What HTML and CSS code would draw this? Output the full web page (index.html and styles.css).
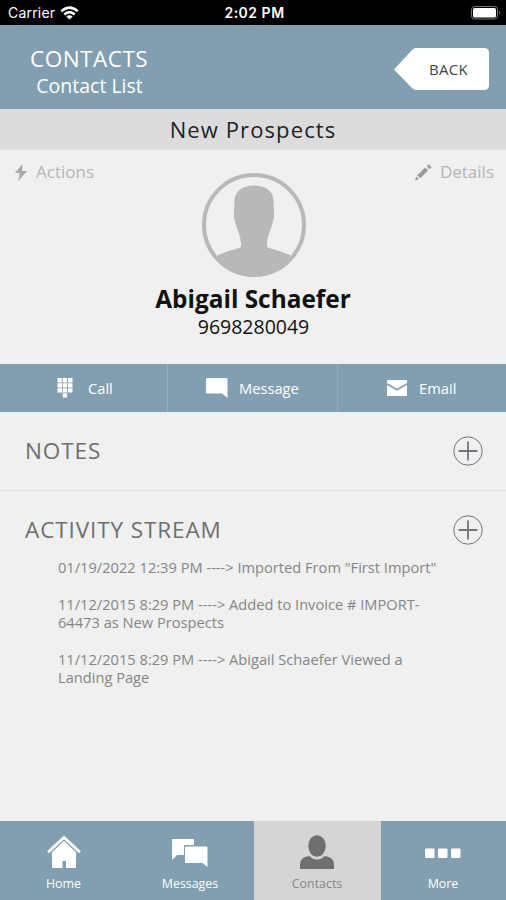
FILE: index.html
```html
<!DOCTYPE html>
<html lang="en">
<head>
    <meta charset="UTF-8">
    <meta name="viewport" content="width=device-width, initial-scale=1.0">
    <title>Contacts</title>
    <link rel="stylesheet" href="styles.css">
</head>
<body>
    <div class="app">
        <div class="status">
            <div class="carrier">
                <span>Carrier</span>
                <svg width="19" height="14" viewBox="0 0 19 14" fill="none" stroke="#fff" stroke-width="2.6">
                    <path d="M1.3 5.2Q9.500-2 17.700 5.200"/>
                    <path d="M4.300 8.400Q9.500 4 14.700 8.400"/>
                    <path d="M9.500 13.600L6.300 10.600Q9.500 8 12.700 10.600Z" fill="#fff" stroke="none"/>
                </svg>
            </div>
            <div class="time">2:02 PM</div>
            <svg class="battery" width="30" height="14" viewBox="0 0 30 14">
                <rect x=".5" y=".5" width="26" height="12.500" rx="3" fill="none" stroke="#777"/>
                <rect x="2" y="2" width="23" height="9.500" rx="1.500" fill="#fff"/>
                <path d="M28 4.500Q30 6.700 28 9Z" fill="#777"/>
            </svg>
        </div>

        <div class="header">
            <div class="titles">
                <h1>CONTACTS</h1>
                <p>Contact List</p>
            </div>
            <a href="#" class="back">
                <svg width="95" height="42" viewBox="0 0 95 42">
                    <path d="M0 21.500L18 2Q20 0 22 0H90Q95 0 95 5V37Q95 42 90 42H22Q20 42 18 40Z" fill="#fff"/>
                </svg>
                <span>BACK</span>
            </a>
        </div>

        <div class="group">New Prospects</div>

        <div class="profile">
            <div class="links">
                <a href="#">
                    <svg width="12" height="17" viewBox="0 0 12 17"><path d="M7.500 0L0 9H4.800L3.300 17L12 7H7Z" fill="#a9a9a9"/></svg>
                    <span class="actions">Actions</span>
                </a>
                <a href="#">
                    <svg width="17" height="17" viewBox="0 0 17 17" fill="#9c9c9c"><path d="M0 16.500L1.200 12.500L4 15.300Z"/><path d="M2.200 11.300L10.200 3.600L13.200 6.600L5.200 14.300Z"/><path d="M11.700 2.200L13.700.2L16.600 3.200L14.600 5.200Z"/></svg>
                    <span class="details">Details</span>
                </a>
            </div>
            <svg class="avatar" width="104" height="104" viewBox="0 0 104 104">
                <circle cx="52" cy="52" r="50" fill="none" stroke="#b9b8b6" stroke-width="4"/>
                <path d="M15 88L16 82Q25 78 37 75Q40 74 39 70C38 60 34 55 33 48C31 43 32 38 32.500 31C31 18 41 12.500 52 12.500C63 12.500 73 18 71.500 31C72 38 73 43 71 48C70 55 66 60 65 70Q64 74 67 75Q79 78 88 82L89 88A51 51 0 0 1 15 88Z" fill="#b9b8b6"/>
            </svg>
            <h2>Abigail Schaefer</h2>
            <p class="phone">9698280049</p>
        </div>

        <div class="bar">
            <a href="#" class="call">
                <svg width="16" height="20" viewBox="0 0 16 20" fill="#fff">
                    <path d="M.5 0h4.500v4.500h-4.500zM5.700 0h4.500v4.500h-4.500zM11 0h4.500v4.500h-4.500zM.5 5.200h4.500v4.300h-4.500zM5.700 5.200h4.500v4.300h-4.500zM11 5.200h4.500v4.300h-4.500zM.5 10.200h4.500v4.300h-4.500zM5.700 10.200h4.500v4.300h-4.500zM11 10.200h4.500v4.300h-4.500zM5.700 15.200h4.500v4.300h-4.500z"/>
                </svg>
                <span>Call</span>
            </a>
            <a href="#" class="message">
                <svg width="22" height="20" viewBox="0 0 22 20"><path d="M1 0H20.500Q21.500 0 21.500 1V20L16 15.500H1Q0 15.500 0 14.500V1Q0 0 1 0Z" fill="#fff"/></svg>
                <span>Message</span>
            </a>
            <a href="#" class="email">
                <svg width="20" height="16" viewBox="0 0 20 16" fill="#fff"><path d="M0 0H20V3L10 8.800L0 3Z"/><path d="M0 5L10 10.700L20 5V16H0Z"/></svg>
                <span>Email</span>
            </a>
        </div>

        <div class="section notes">
            <h3>NOTES</h3>
            <svg class="plus" width="30" height="30" viewBox="0 0 30 30" fill="none" stroke="#73757a"><circle cx="15" cy="15" r="14.200"/><path d="M15 5.500V24.500M5.500 15H24.500" stroke-width="1.800"/></svg>
        </div>
        <div class="section activity">
            <h3>ACTIVITY STREAM</h3>
            <svg class="plus" width="30" height="30" viewBox="0 0 30 30" fill="none" stroke="#73757a"><circle cx="15" cy="15" r="14.200"/><path d="M15 5.500V24.500M5.500 15H24.500" stroke-width="1.800"/></svg>
        </div>
        <ul class="stream">
            <li>01/19/2022 12:39 PM ----&gt; Imported From "First Import"</li>
            <li>11/12/2015 8:29 PM ----&gt; Added to Invoice # IMPORT-<br>64473 as New Prospects</li>
            <li>11/12/2015 8:29 PM ----&gt; Abigail Schaefer Viewed a<br>Landing Page</li>
        </ul>

        <div class="tabs">
            <a href="#">
                <svg width="34" height="34" viewBox="0 0 34 34">
                    <path d="M1 17.300L17 2.500L33 17.300" fill="none" stroke="#fff" stroke-width="2.800"/>
                    <path d="M17 6L29 17.300V33H19V26H15.500V33H5V17.300Z" fill="#fff"/>
                </svg>
                <span>Home</span>
            </a>
            <a href="#">
                <svg width="36" height="34" viewBox="0 0 36 34" fill="#fff">
                    <path d="M1 4H21Q22 4 22 5V10H13Q12 10 12 11V20H5L0 25V5Q0 4 1 4Z"/>
                    <path d="M14 11.500H34.500Q35.500 11.500 35.500 12.500V32L30.500 28H14Q13 28 13 27V12.500Q13 11.500 14 11.500Z"/>
                </svg>
                <span>Messages</span>
            </a>
            <a href="#" class="active">
                <svg width="34" height="34" viewBox="0 0 34 34" fill="#6f6f6f">
                    <ellipse cx="17" cy="11" rx="8.700" ry="10.800"/>
                    <path d="M0 34V30Q0 22.500 7 21.500L9.500 21Q12.500 24.500 17 24.500Q21.500 24.500 24.500 21L27 21.500Q34 22.500 34 30V34Z"/>
                </svg>
                <span>Contacts</span>
            </a>
            <a href="#">
                <svg width="36" height="34" viewBox="0 0 36 34" fill="#fff">
                    <rect x="0" y="13.500" width="9.500" height="9.500" rx="1"/>
                    <rect x="13" y="13.500" width="9.500" height="9.500" rx="1"/>
                    <rect x="26" y="13.500" width="9.500" height="9.500" rx="1"/>
                </svg>
                <span>More</span>
            </a>
        </div>
    </div>
</body>
</html>
```
FILE: styles.css
```css
* {
    padding: 0;
    margin: 0;
    box-sizing: border-box;
    list-style: none;
    text-decoration: none;
}

body {
    font-family: "Open Sans", "Noto Sans", sans-serif;
    background-color: #f0f0f0;
}
a {
    color: inherit;
}
svg {
    display: block;
    flex: none;
}
span, h1, h2, h3, p {
    white-space: nowrap;
}

.app {
    width: 506px;
    height: 900px;
    display: flex;
    flex-direction: column;
    overflow: hidden;
}

.status {
    height: 25px;
    padding: 0 5px 0 8px;
    background-color: #000;
    color: #fff;
    font: 14px/26px Inter, sans-serif;
    display: grid;
    grid-template-columns: 1fr auto 1fr;
    align-items: center;
}
.carrier {
    display: flex;
    align-items: center;
    gap: 5px;
    letter-spacing: 0.2px;
}
.time {
    font-weight: 600;
    letter-spacing: 0.5px;
}
.battery {
    justify-self: end;
}

.header {
    height: 84px;
    padding: 0 17px 0 30px;
    background-color: #819fb0;
    color: #fff;
    display: flex;
    justify-content: space-between;
}
.titles {
    padding-top: 19px;
    text-align: center;
}
.titles h1 {
    font-size: 22.5px;
    font-weight: 400;
    line-height: 30px;
    letter-spacing: 0.5px;
}
.titles p {
    padding-left: 1px;
    font-size: 19.5px;
    line-height: 23px;
}
.back {
    margin-top: 23px;
    height: 42px;
    display: grid;
    color: #444;
    font-size: 15px;
    line-height: 42px;
}
.back svg, .back span {
    grid-area: 1 / 1;
}
.back span {
    padding-left: 35px;
    letter-spacing: 0.3px;
}

.group {
    height: 41px;
    background-color: #dcdcdc;
    color: #222;
    font-size: 22px;
    line-height: 41px;
    letter-spacing: 1.1px;
    text-align: center;
}

.profile {
    height: 214px;
    display: flex;
    flex-direction: column;
    align-items: center;
    color: #111;
}
.links {
    width: 100%;
    height: 23px;
    padding: 10px 12px 0 15px;
    display: flex;
    justify-content: space-between;
    color: #b5b5b5;
    font-size: 17px;
    line-height: 24px;
}
.links a {
    height: 24px;
    display: flex;
    align-items: center;
    gap: 8px;
}
.links .actions {
    padding-left: 1px;
}
.avatar {
    margin-left: 2px;
}
.profile h2 {
    margin-top: 5px;
    font-size: 24.4px;
    font-weight: 700;
    line-height: 33px;
}
.phone {
    padding-left: 1px;
    font-size: 19.5px;
    line-height: 24px;
}

.bar {
    height: 48px;
    background-color: #819fb0;
    color: #fff;
    display: grid;
    grid-template-columns: 167px 170px 169px;
    font-size: 14.7px;
}
.bar a {
    padding-bottom: 1px;
    display: flex;
    align-items: center;
}
.bar a + a {
    border-left: 1px solid #95adbb;
}
.bar .call {
    padding-left: 57px;
    gap: 15px;
}
.bar .message {
    padding-left: 38px;
    gap: 11px;
}
.bar .email {
    padding-left: 49px;
    gap: 12px;
}

.section {
    height: 79px;
    padding: 0 23px 0 25px;
    display: flex;
    align-items: center;
    justify-content: space-between;
    color: #6e6e6e;
}
.section h3 {
    padding-bottom: 1px;
    font-size: 22.5px;
    font-weight: 400;
    letter-spacing: 0.9px;
}
.notes {
    border-bottom: 1px solid #dedede;
}
.activity {
    height: 78px;
}

.stream {
    margin-top: -11px;
    padding-left: 58px;
    color: #858585;
    font-size: 14.65px;
    line-height: 18px;
    display: flex;
    flex-direction: column;
    gap: 19px;
}

.tabs {
    height: 79px;
    margin-top: auto;
    background-color: #819fb0;
    color: #fff;
    display: grid;
    grid-template-columns: 127px 127px 127px 125px;
}
.tabs a {
    padding: 14px 1px 0 0;
    display: flex;
    flex-direction: column;
    align-items: center;
    font-size: 12.4px;
    line-height: 18px;
}
.tabs a:first-child {
    padding-right: 0;
}
.tabs span {
    margin-top: 6px;
}
.tabs .active {
    background-color: #d5d5d5;
    color: #858585;
}
```
